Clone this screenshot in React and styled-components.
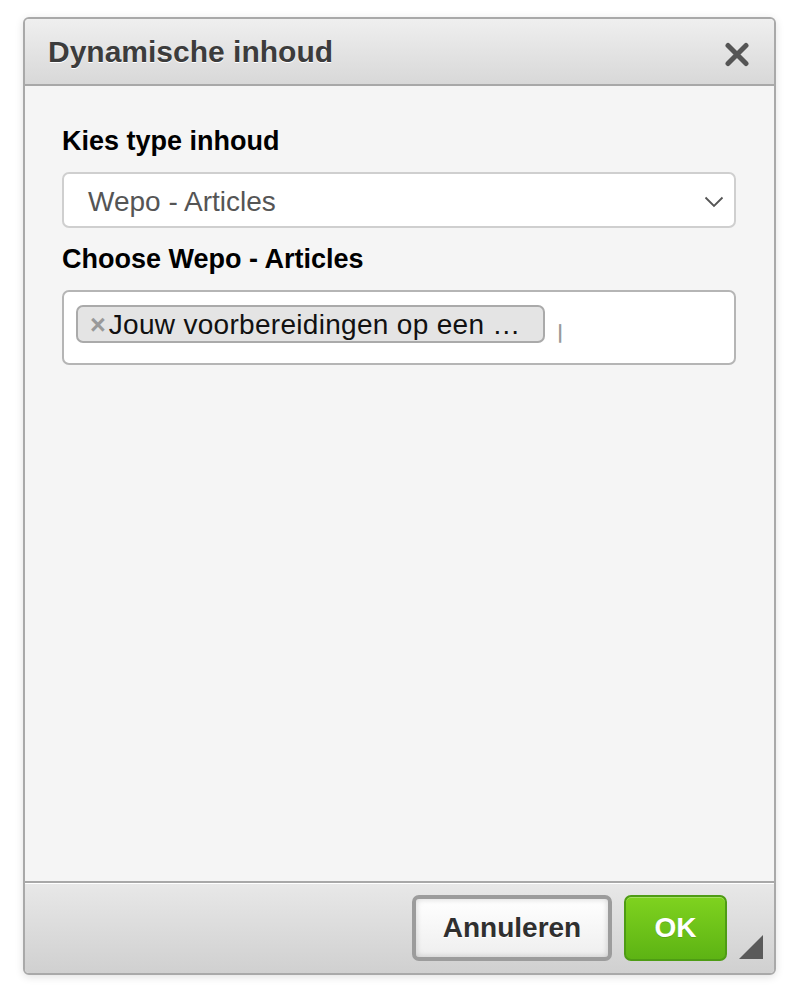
import React from "react";
import styled, { createGlobalStyle } from "styled-components";

const Global = createGlobalStyle`
  html, body { margin: 0; padding: 0; background: #ffffff; }
  body { font-family: "Liberation Sans", Arial, sans-serif; }
  * { box-sizing: border-box; }
`;

const Page = styled.div`
  padding: 17px 0 0 23px;
  width: 800px;
  height: 992px;
`;

const Dialog = styled.div`
  width: 753px;
  height: 958px;
  display: flex;
  flex-direction: column;
  border: 2px solid #a9a9a9;
  border-radius: 6px;
  background: #f5f5f5;
  box-shadow: 0 2px 8px rgba(0, 0, 0, 0.12);
  overflow: hidden;
`;

const Header = styled.div`
  height: 67px;
  flex: none;
  display: flex;
  align-items: center;
  justify-content: space-between;
  padding: 0 22px 0 23px;
  background: linear-gradient(#efefef, #d8d8d8);
  border-bottom: 2px solid #a8a8a8;
`;

const Title = styled.h1`
  margin: 0;
  font-size: 30px;
  font-weight: 700;
  color: #3c3c3c;
  text-shadow: 0 1px 0 #ffffff;
`;

const CloseButton = styled.button`
  width: 30px;
  height: 30px;
  padding: 0;
  border: 0;
  background: none;
  display: flex;
  align-items: center;
  justify-content: center;
  margin-top: 5px;
`;

const Body = styled.div`
  flex: 1;
  padding: 38px 38px 0 37px;
  display: flex;
  flex-direction: column;
`;

const Label = styled.div`
  font-size: 27px;
  font-weight: 700;
  color: #000;
  line-height: 34px;
  margin-bottom: ${(p) => p.$mb}px;
`;

const SelectBox = styled.div`
  height: 56px;
  background: #fff;
  border: 2px solid #cfcfcf;
  border-radius: 7px;
  display: flex;
  align-items: center;
  justify-content: space-between;
  padding: 4px 10px 0 24px;
  margin-bottom: 14px;
`;

const SelectValue = styled.span`
  font-size: 28px;
  color: #555;
`;

const MultiBox = styled.div`
  height: 75px;
  background: #fff;
  border: 2px solid #b5b5b5;
  border-radius: 7px;
  display: flex;
  align-items: flex-start;
  padding: 13px 12px 0 12px;
  gap: 12px;
`;

const Tag = styled.div`
  height: 38px;
  width: 469px;
  display: flex;
  align-items: center;
  background: #e4e4e4;
  border: 2px solid #aaaaaa;
  border-radius: 7px;
  padding: 2px 0 0 12px;
  white-space: nowrap;
  overflow: hidden;
`;

const TagRemove = styled.span`
  font-size: 27px;
  font-weight: 700;
  color: #999;
  margin-right: 3px;
  line-height: 1;
`;

const TagText = styled.span`
  font-size: 28px;
  letter-spacing: 0.3px;
  color: #111;
  line-height: 1;
`;

const SearchCaret = styled.span`
  font-size: 24px;
  color: #999;
  margin-top: 12px;
  line-height: 1;
`;

const Footer = styled.div`
  height: 92px;
  flex: none;
  display: flex;
  align-items: flex-start;
  justify-content: flex-end;
  gap: 12px;
  padding: 12px 47px 0 0;
  border-top: 2px solid #a8a8a8;
  box-shadow: inset 0 1px 0 #ffffff;
  background: linear-gradient(#e8e8e8, #d0d0d0);
  position: relative;
`;

const Button = styled.button`
  height: 66px;
  padding: 0;
  width: ${(p) => p.$w}px;
  border-radius: 7px;
  font-family: "Liberation Sans", Arial, sans-serif;
  font-size: 28px;
  font-weight: 700;
  cursor: pointer;
  border: ${(p) => (p.$primary ? "2px solid #4e9c14" : "4px solid #9c9c9c")};
  color: ${(p) => (p.$primary ? "#ffffff" : "#2f2f2f")};
  background: ${(p) =>
    p.$primary
      ? "linear-gradient(#7fd21f, #5db314)"
      : "linear-gradient(#ffffff, #eeeeee)"};
  box-shadow: ${(p) =>
    p.$primary
      ? "inset 0 1px 0 rgba(255,255,255,0.3)"
      : "inset 0 0 6px rgba(0,0,0,0.18)"};
  text-shadow: ${(p) => (p.$primary ? "0 1px 0 rgba(0,0,0,0.15)" : "0 1px 0 #fff")};
`;

const ResizeGrip = styled.svg`
  position: absolute;
  right: 11px;
  bottom: 14px;
`;

export default function App() {
  return (
    <Page>
      <Global />
      <Dialog>
        <Header>
          <Title>Dynamische inhoud</Title>
          <CloseButton aria-label="Sluiten">
            <svg width="26" height="25" viewBox="0 0 26 25">
              <path
                d="M4 3.5 L22 21.5 M22 3.5 L4 21.5"
                stroke="#555"
                strokeWidth="5"
                strokeLinecap="round"
              />
            </svg>
          </CloseButton>
        </Header>
        <Body>
          <Label $mb={14}>Kies type inhoud</Label>
          <SelectBox>
            <SelectValue>Wepo - Articles</SelectValue>
            <svg width="20" height="12" viewBox="0 0 20 12">
              <path d="M1.5 1.5 L10 10 L18.5 1.5" fill="none" stroke="#555" strokeWidth="1.8" />
            </svg>
          </SelectBox>
          <Label $mb={14}>Choose Wepo - Articles</Label>
          <MultiBox>
            <Tag>
              <TagRemove>×</TagRemove>
              <TagText>Jouw voorbereidingen op een …</TagText>
            </Tag>
            <SearchCaret>ꞁ</SearchCaret>
          </MultiBox>
        </Body>
        <Footer>
          <Button $w={200}>Annuleren</Button>
          <Button $w={103} $primary>OK</Button>
          <ResizeGrip width="24" height="24" viewBox="0 0 24 24">
            <polygon points="24,0 24,24 0,24" fill="#5a5a5a" />
          </ResizeGrip>
        </Footer>
      </Dialog>
    </Page>
  );
}
